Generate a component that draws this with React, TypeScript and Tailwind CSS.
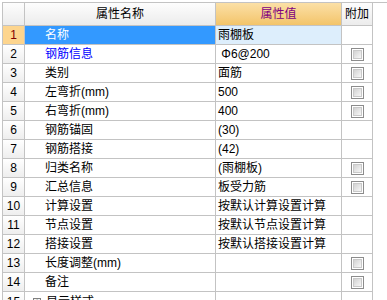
import React from 'react';

type Row = { name: string; value: string; check: boolean; blue?: boolean };

const rows: Row[] = [
  { name: '名称', value: '雨棚板', check: false },
  { name: '钢筋信息', value: ' Φ6@200', check: true, blue: true },
  { name: '类别', value: '面筋', check: true },
  { name: '左弯折(mm)', value: '500', check: true },
  { name: '右弯折(mm)', value: '400', check: true },
  { name: '钢筋锚固', value: '(30)', check: false },
  { name: '钢筋搭接', value: '(42)', check: false },
  { name: '归类名称', value: '(雨棚板)', check: true },
  { name: '汇总信息', value: '板受力筋', check: true },
  { name: '计算设置', value: '按默认计算设置计算', check: false },
  { name: '节点设置', value: '按默认节点设置计算', check: false },
  { name: '搭接设置', value: '按默认搭接设置计算', check: false },
  { name: '长度调整(mm)', value: '', check: true },
  { name: '备注', value: '', check: true },
];

function CheckBox() {
  return (
    <div className="w-[13px] h-[13px] border border-[#8c8c8c] p-[1px] bg-white">
      <div className="w-full h-full border border-[#c9c9c9] bg-gradient-to-br from-[#d2d2d2] to-[#f7f7f7]" />
    </div>
  );
}

export default function App() {
  return (
    <div
      className="w-[387px] h-[300px] overflow-hidden bg-white text-[12px] leading-none text-black"
      style={{ fontFamily: '"Liberation Sans", "Noto Sans CJK SC", sans-serif' }}
    >
      <div className="mt-[2px] ml-[2px] border-t border-l border-[#c3c3c3]">
        {/* header */}
        <div className="flex h-[23px]">
          <div className="w-[22px] border-r border-b border-[#c3c3c3] bg-gradient-to-b from-[#fdfdfd] to-[#ececec]" />
          <div className="w-[191px] border-r border-b border-[#c3c3c3] bg-gradient-to-b from-[#fdfdfd] to-[#ececec] flex items-center justify-center">
            属性名称
          </div>
          <div className="w-[126px] border-r border-b border-[#c3c3c3] bg-gradient-to-b from-[#fbe0a6] to-[#f3c469] flex items-center justify-center text-[#800080]">
            属性值
          </div>
          <div className="w-[31px] border-r border-b border-[#c3c3c3] bg-gradient-to-b from-[#fdfdfd] to-[#ececec] flex items-center justify-center">
            附加
          </div>
        </div>

        {rows.map((r, i) => {
          const sel = i === 0;
          return (
            <div key={i} className="flex h-[19px]">
              <div
                className={`w-[22px] border-r border-b border-[#c3c3c3] flex items-center justify-center ${
                  sel ? 'bg-[#fdd58e] text-[#800000]' : 'bg-gradient-to-b from-[#ffffff] to-[#eeeeee]'
                }`}
              >
                {i + 1}
              </div>
              <div
                className={`w-[191px] border-r border-b border-[#c3c3c3] flex items-center pl-[20px] ${
                  sel ? 'bg-[#3399ff] text-white' : r.blue ? 'text-[#0000ff]' : ''
                }`}
              >
                {r.name}
              </div>
              <div
                className={`w-[126px] border-r border-b border-[#c3c3c3] flex items-center pl-[2px] whitespace-pre ${
                  sel ? 'bg-[#ddeefc]' : ''
                }`}
              >
                {r.value}
              </div>
              <div className="w-[31px] border-r border-b border-[#c3c3c3] flex items-center justify-center">
                {r.check && <CheckBox />}
              </div>
            </div>
          );
        })}

        {/* partially visible row 15 */}
        <div className="flex h-[19px]">
          <div className="w-[22px] border-r border-[#c3c3c3] bg-gradient-to-b from-[#ffffff] to-[#eeeeee] flex items-center justify-center">
            15
          </div>
          <div className="w-[191px] border-r border-[#c3c3c3] flex items-center pl-[8px] gap-[5px]">
            <div className="w-[8px] h-[8px] border border-[#808080] bg-[#f4f4f4] flex items-center justify-center text-[8px] leading-none">
              +
            </div>
            <span>显示样式</span>
          </div>
          <div className="w-[126px] border-r border-[#c3c3c3]" />
          <div className="w-[31px] border-r border-[#c3c3c3]" />
        </div>
      </div>
    </div>
  );
}
